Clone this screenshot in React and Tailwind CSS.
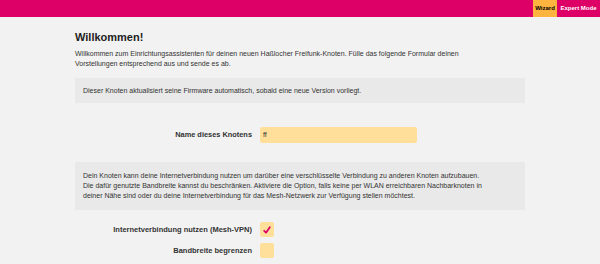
export default function App() {
  return (
    <div className="min-h-[264px] bg-[#f2f2f2] text-[#333] font-['Liberation_Sans',Arial,sans-serif]">
      <div className="h-[17px] bg-[#dc0067] flex justify-end items-stretch">
        <div className="w-[24px] bg-[#ffb43f] flex items-center justify-center text-[6px] font-bold text-black">Wizard</div>
        <div className="w-[43px] flex items-center justify-center text-[6px] font-bold text-white">Expert Mode</div>
      </div>
      <div className="w-[450px] mx-auto">
        <h1 className="mt-[14px] text-[11px] leading-[13px] font-bold text-[#222]">Willkommen!</h1>
        <p className="mt-[5px] text-[7px] leading-[10px]">
          Willkommen zum Einrichtungsassistenten für deinen neuen Haßlocher Freifunk-Knoten. Fülle das folgende Formular deinen
          <br />
          Vorstellungen entsprechend aus und sende es ab.
        </p>
        <div className="mt-[9px] h-[25px] bg-[#e9e9e9] flex items-center px-[8px] text-[7px] leading-[10px]">
          Dieser Knoten aktualisiert seine Firmware automatisch, sobald eine neue Version vorliegt.
        </div>
        <div className="mt-[24px] grid grid-cols-[177px_1fr] gap-x-[8px] items-center">
          <div className="text-right text-[7.4px] font-bold">Name dieses Knotens</div>
          <div className="w-[157px] h-[16px] bg-[#ffdf99] rounded-[2px] flex items-center px-[3px] text-[7px]">ff</div>
        </div>
        <div className="mt-[19px] bg-[#e9e9e9] px-[8px] py-[9px] text-[7px] leading-[10px]">
          Dein Knoten kann deine Internetverbindung nutzen um darüber eine verschlüsselte Verbindung zu anderen Knoten aufzubauen.
          <br />
          Die dafür genutzte Bandbreite kannst du beschränken. Aktiviere die Option, falls keine per WLAN erreichbaren Nachbarknoten in
          <br />
          deiner Nähe sind oder du deine Internetverbindung für das Mesh-Netzwerk zur Verfügung stellen möchtest.
        </div>
        <div className="mt-[12px] grid grid-cols-[177px_1fr] gap-x-[8px] gap-y-[6px] items-center">
          <div className="text-right text-[7.5px] font-bold">Internetverbindung nutzen (Mesh-VPN)</div>
          <div className="w-[14px] h-[15px] bg-[#ffdf99] rounded-[2px] flex items-center justify-center">
            <svg width="8" height="8" viewBox="0 0 10 10">
              <path d="M1.5 6 L3.8 8.3 L8.5 1.5" fill="none" stroke="#dc0067" strokeWidth="2.2" strokeLinecap="round" strokeLinejoin="round" />
            </svg>
          </div>
          <div className="text-right text-[7.5px] font-bold">Bandbreite begrenzen</div>
          <div className="w-[14px] h-[15px] bg-[#ffdf99] rounded-[2px]"></div>
        </div>
      </div>
    </div>
  );
}
